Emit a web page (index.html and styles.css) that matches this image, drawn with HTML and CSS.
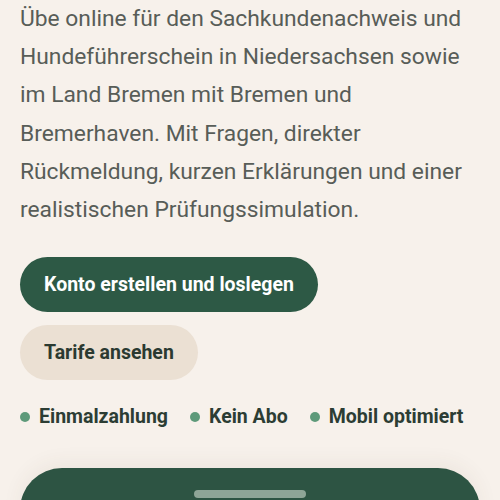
FILE: index.html
```html
<!DOCTYPE html>
<html lang="de">
<head>
<meta charset="utf-8">
<link rel="stylesheet" href="styles.css">
</head>
<body>
<main class="hero">
  <p class="lead">Übe online für den Sachkundenachweis und Hundeführerschein in Niedersachsen sowie im Land Bremen mit Bremen und Bremerhaven. Mit Fragen, direkter Rückmeldung, kurzen Erklärungen und einer realistischen Prüfungssimulation.</p>
  <div class="actions">
    <a class="btn btn-primary" href="#">Konto erstellen und loslegen</a>
    <a class="btn btn-secondary" href="#">Tarife ansehen</a>
  </div>
  <ul class="features">
    <li><span class="dot"></span>Einmalzahlung</li>
    <li><span class="dot"></span>Kein Abo</li>
    <li><span class="dot"></span>Mobil optimiert</li>
  </ul>
  <div class="sheet"><span class="handle"></span></div>
</main>
</body>
</html>
```
FILE: styles.css
```css
html, body {
  margin: 0;
  padding: 0;
  background: #f7f1eb;
}
body {
  font-family: Roboto, "Liberation Sans", sans-serif;
  height: 500px;
  overflow: hidden;
}
.hero {
  padding: 0 20px;
}
.lead {
  margin: 0;
  font-size: 22.8px;
  line-height: 38.2px;
  color: #585d58;
}
.actions {
  margin-top: 28px;
  display: flex;
  flex-direction: column;
  align-items: flex-start;
  gap: 13px;
}
.btn {
  display: inline-flex;
  align-items: center;
  height: 55px;
  padding: 0 24px;
  border-radius: 28px;
  font-weight: 700;
  font-size: 19.5px;
  text-decoration: none;
}
.btn-primary {
  background: #2d5945;
  color: #ffffff;
}
.btn-secondary {
  background: #ebe0d3;
  color: #2b3a31;
}
.features {
  list-style: none;
  margin: 23px 0 0;
  padding: 0;
  display: flex;
  gap: 22px;
  font-weight: 700;
  font-size: 19.5px;
  color: #2c3d34;
}
.features li {
  display: flex;
  align-items: center;
  gap: 9px;
  line-height: 28px;
}
.dot {
  width: 10px;
  height: 10px;
  border-radius: 50%;
  background: #5e9a7a;
}
.sheet {
  margin-top: 37px;
  height: 80px;
  background: #2d5443;
  border-radius: 42px 42px 0 0;
  display: flex;
  justify-content: center;
  padding-top: 22px;
  box-sizing: border-box;
  box-shadow: 0 -6px 20px rgba(80, 70, 50, 0.06);
}
.handle {
  width: 112px;
  height: 8px;
  border-radius: 4px;
  background: #8ea597;
}
```
